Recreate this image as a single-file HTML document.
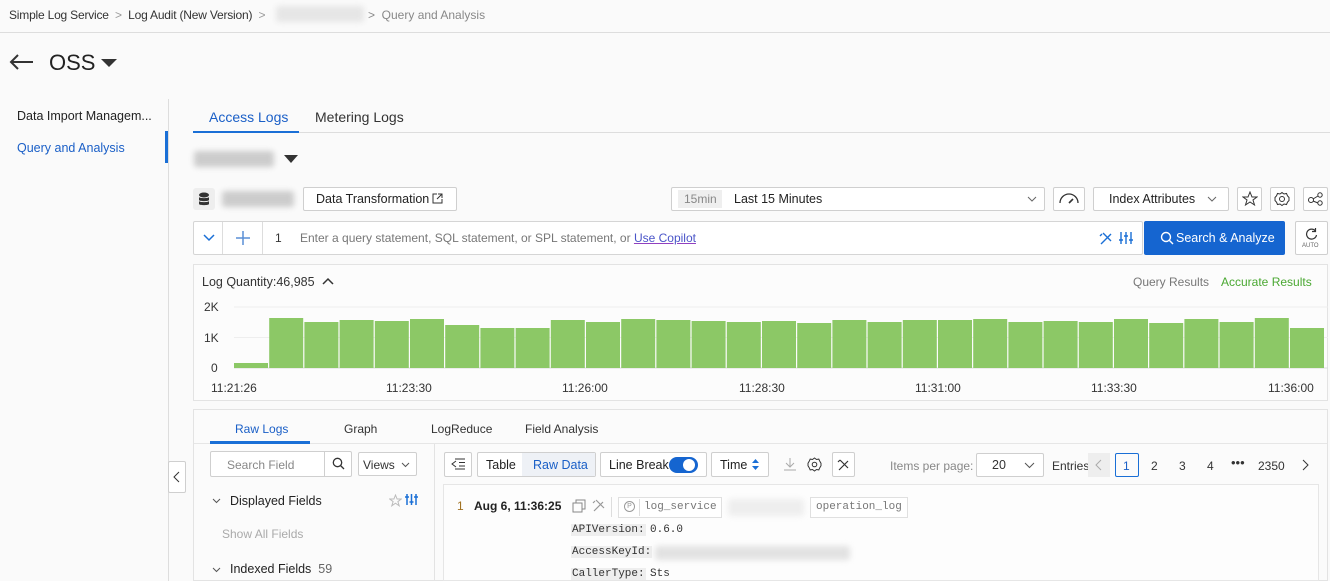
<!DOCTYPE html>
<html><head><meta charset="utf-8"><style>
*{box-sizing:border-box;margin:0;padding:0}
body{width:1330px;height:581px;overflow:hidden;background:#fafafa;font-family:"Liberation Sans",sans-serif;font-size:12px;color:#333;position:relative}
.a{position:absolute;white-space:nowrap}
.btn{position:absolute;border:1px solid #cfcfcf;background:#fff;border-radius:2px}
.blur{position:absolute;background:#ddd;filter:blur(3px);border-radius:3px}
.mono{font-family:"Liberation Mono",monospace;font-size:11px}
</style></head><body>
<div class="a" style="left:9px;top:8px;font-size:12px;color:#333;letter-spacing:-0.2px">Simple Log Service <span style="color:#999">&nbsp;&gt;&nbsp;</span> Log Audit (New Version) <span style="color:#999">&nbsp;&gt;</span></div>
<div class="blur" style="left:276px;top:6px;width:88px;height:16px;background:#e6e6e6"></div>
<div class="a" style="left:368px;top:8px;color:#888">&gt;&nbsp; Query and Analysis</div>
<div class="a" style="left:0;top:32px;width:1330px;height:1px;background:#ddd"></div>
<svg class="a" style="left:9px;top:53px" width="26" height="18"><path d="M24 9H2M9 2L2 9l7 7" stroke="#333" stroke-width="2" fill="none"/></svg>
<div class="a" style="left:49px;top:50px;font-size:22px;color:#222">OSS</div>
<svg class="a" style="left:101px;top:59px" width="16" height="9"><path d="M0 0h16L8 8z" fill="#333"/></svg>
<div class="a" style="left:17px;top:109px;font-size:12.5px;color:#222">Data Import Managem...</div>
<div class="a" style="left:17px;top:141px;font-size:12.5px;color:#1a5fc7">Query and Analysis</div>
<div class="a" style="left:168px;top:99px;width:1px;height:482px;background:#ddd"></div>
<div class="a" style="left:165px;top:131px;width:3px;height:32px;background:#1a6fd6"></div>
<div class="a" style="left:209px;top:109px;font-size:14px;color:#1a5fc7">Access Logs</div>
<div class="a" style="left:315px;top:109px;font-size:14px;color:#333">Metering Logs</div>
<div class="a" style="left:193px;top:131px;width:106px;height:2px;background:#1a6fd6"></div>
<div class="a" style="left:299px;top:132px;width:1031px;height:1px;background:#ddd"></div>
<div class="blur" style="left:194px;top:151px;width:80px;height:16px;background:#ccc"></div>
<svg class="a" style="left:284px;top:155px" width="14" height="8"><path d="M0 0h14L7 8z" fill="#333"/></svg>
<div class="a" style="left:193px;top:188px;width:22px;height:22px;background:#eee;border-radius:3px"></div>
<svg class="a" style="left:198px;top:192px" width="12" height="14"><ellipse cx="6" cy="3" rx="5" ry="2.5" fill="#333"/><path d="M1 5v3c0 1.5 10 1.5 10 0V5c0 1.5-10 1.5-10 0zM1 9v3c0 1.5 10 1.5 10 0V9c0 1.5-10 1.5-10 0z" fill="#333"/></svg>
<div class="blur" style="left:222px;top:191px;width:72px;height:16px;background:#ccc"></div>
<div class="btn" style="left:303px;top:187px;width:154px;height:24px"></div>
<div class="a" style="left:316px;top:192px;font-size:12.5px;color:#222">Data Transformation</div>
<svg class="a" style="left:432px;top:193px" width="11" height="11"><path d="M5 1H1v9h9V6M6 1h4v4M10 1L5 6" stroke="#333" fill="none"/></svg>
<div class="btn" style="left:671px;top:187px;width:374px;height:24px"></div>
<div class="a" style="left:678px;top:190px;width:44px;height:18px;background:#efefef"></div>
<div class="a" style="left:684px;top:192px;font-size:12px;color:#888">15min</div>
<div class="a" style="left:734px;top:192px;font-size:12.5px;color:#222">Last 15 Minutes</div>
<svg class="a" style="left:1027px;top:196px" width="10" height="6"><path d="M1 1l4 4 4-4" stroke="#666" fill="none"/></svg>
<div class="btn" style="left:1053px;top:187px;width:32px;height:24px"></div>
<svg class="a" style="left:1058px;top:191px" width="22" height="14"><path d="M2 12A9 9 0 0 1 20 12" stroke="#333" stroke-width="1.3" fill="none"/><path d="M11 12l4-4" stroke="#333" stroke-width="1.6"/></svg>
<div class="btn" style="left:1093px;top:187px;width:136px;height:24px"></div>
<div class="a" style="left:1109px;top:192px;font-size:12.5px;color:#222">Index Attributes</div>
<svg class="a" style="left:1207px;top:196px" width="10" height="6"><path d="M1 1l4 4 4-4" stroke="#666" fill="none"/></svg>
<div class="btn" style="left:1237px;top:187px;width:25px;height:24px"></div>
<svg class="a" style="left:1242px;top:191px" width="16" height="16"><path d="M8 1l2 5h5l-4 3 1.5 5L8 11l-4.5 3L5 9 1 6h5z" stroke="#333" fill="none"/></svg>
<div class="btn" style="left:1270px;top:187px;width:25px;height:24px"></div>
<svg class="a" style="left:1274px;top:191px" width="16" height="16"><circle cx="8" cy="8" r="2.5" stroke="#333" fill="none"/><path d="M8 1.5l2 1.5 2.5-.5 1 2.3L15 6.5v3l-1.5 1.7-1 2.3-2.5-.5L8 14.5 6 13l-2.5.5-1-2.3L1 9.5v-3l1.5-1.7 1-2.3L6 3z" stroke="#333" fill="none"/></svg>
<div class="btn" style="left:1303px;top:187px;width:25px;height:24px"></div>
<svg class="a" style="left:1307px;top:192px" width="17" height="14"><circle cx="4" cy="8" r="2.5" stroke="#333" fill="none"/><circle cx="13" cy="3" r="2.2" stroke="#333" fill="none"/><circle cx="13" cy="11" r="2.2" stroke="#333" fill="none"/><path d="M6 7l5-3M6 9l5 2" stroke="#333"/></svg>
<div class="btn" style="left:193px;top:221px;width:950px;height:34px;border-color:#d5d5d5"></div>
<div class="a" style="left:222px;top:222px;width:1px;height:32px;background:#ddd"></div>
<div class="a" style="left:262px;top:222px;width:1px;height:32px;background:#ddd"></div>
<svg class="a" style="left:203px;top:234px" width="12" height="8"><path d="M1 1l5 5 5-5" stroke="#1a6fd6" stroke-width="1.5" fill="none"/></svg>
<svg class="a" style="left:236px;top:231px" width="14" height="14"><path d="M7 0v14M0 7h14" stroke="#5a8fd6" stroke-width="1.5"/></svg>
<div class="a" style="left:275px;top:231px;color:#333">1</div>
<div class="a" style="left:300px;top:231px;color:#777">Enter a query statement, SQL statement, or SPL statement, or <span style="color:#4a55c8;text-decoration:underline;text-decoration-color:#9040c0">Use Copilot</span></div>
<svg class="a" style="left:1099px;top:231px" width="14" height="14"><path d="M2 13L12 3M4 2l8 8M1 5l2-2" stroke="#1a6fd6" stroke-width="1.4" fill="none"/></svg>
<svg class="a" style="left:1119px;top:231px" width="14" height="14"><path d="M2 1v12M7 1v12M12 1v12M0 9h4M5 5h4M10 9h4" stroke="#1a6fd6" stroke-width="1.4"/></svg>
<div class="a" style="left:1144px;top:221px;width:141px;height:34px;background:#1565d0;border-radius:2px"></div>
<svg class="a" style="left:1160px;top:231px" width="14" height="14"><circle cx="6" cy="6" r="4.5" stroke="#fff" stroke-width="1.4" fill="none"/><path d="M9.5 9.5l3.5 3.5" stroke="#fff" stroke-width="1.4"/></svg>
<div class="a" style="left:1176px;top:231px;color:#fff;font-size:12.5px">Search &amp; Analyze</div>
<div class="btn" style="left:1295px;top:221px;width:33px;height:34px"></div>
<svg class="a" style="left:1305px;top:227px" width="13" height="13"><path d="M10.5 4A5 5 0 1 0 11.5 8M10.5 1v3.5H7" stroke="#333" stroke-width="1.2" fill="none"/></svg>
<div class="a" style="left:1302px;top:243px;font-size:6px;color:#666">AUTO</div>
<div class="a" style="left:193px;top:264px;width:1135px;height:137px;border:1px solid #e3e3e3;background:#fcfcfc"></div>
<div class="a" style="left:202px;top:275px;font-size:12.5px;color:#333">Log Quantity:46,985</div>
<svg class="a" style="left:322px;top:277px" width="12" height="8"><path d="M1 7l5-5 5 5" stroke="#333" stroke-width="1.5" fill="none"/></svg>
<div class="a" style="left:1133px;top:275px;color:#777">Query Results</div>
<div class="a" style="left:1221px;top:275px;color:#4aa832">Accurate Results</div>
<div class="a" style="left:204px;top:300px;color:#333">2K</div>
<div class="a" style="left:204px;top:331px;color:#333">1K</div>
<div class="a" style="left:211px;top:361px;color:#333">0</div>
<svg class="a" style="left:230px;top:300px" width="1098" height="80">
<path d="M4 7H1098M4 37.5H1098" stroke="#eee"/>
<path d="M4 68H1098" stroke="#ddd"/>
<g fill="#8cc866">
<rect x="4" y="63" width="34" height="5"/>
<rect x="39.2" y="18" width="34" height="50"/>
<rect x="74.4" y="22" width="34" height="46"/>
<rect x="109.6" y="20" width="34" height="48"/>
<rect x="144.8" y="21" width="34" height="47"/>
<rect x="180" y="19" width="34" height="49"/>
<rect x="215.2" y="25" width="34" height="43"/>
<rect x="250.4" y="28" width="34" height="40"/>
<rect x="285.6" y="28" width="34" height="40"/>
<rect x="320.8" y="20" width="34" height="48"/>
<rect x="356" y="22" width="34" height="46"/>
<rect x="391.2" y="19" width="34" height="49"/>
<rect x="426.4" y="20" width="34" height="48"/>
<rect x="461.6" y="21" width="34" height="47"/>
<rect x="496.8" y="22" width="34" height="46"/>
<rect x="532" y="21" width="34" height="47"/>
<rect x="567.2" y="23" width="34" height="45"/>
<rect x="602.4" y="20" width="34" height="48"/>
<rect x="637.6" y="22" width="34" height="46"/>
<rect x="672.8" y="20" width="34" height="48"/>
<rect x="708" y="20" width="34" height="48"/>
<rect x="743.2" y="19" width="34" height="49"/>
<rect x="778.4" y="22" width="34" height="46"/>
<rect x="813.6" y="21" width="34" height="47"/>
<rect x="848.8" y="22" width="34" height="46"/>
<rect x="884" y="19" width="34" height="49"/>
<rect x="919.2" y="23" width="34" height="45"/>
<rect x="954.4" y="19" width="34" height="49"/>
<rect x="989.6" y="22" width="34" height="46"/>
<rect x="1024.8" y="18" width="34" height="50"/>
<rect x="1060" y="28" width="34" height="40"/>
</g></svg>
<div class="a" style="left:211px;top:381px;color:#333">11:21:26</div>
<div class="a" style="left:386px;top:381px;color:#333">11:23:30</div>
<div class="a" style="left:562px;top:381px;color:#333">11:26:00</div>
<div class="a" style="left:739px;top:381px;color:#333">11:28:30</div>
<div class="a" style="left:915px;top:381px;color:#333">11:31:00</div>
<div class="a" style="left:1091px;top:381px;color:#333">11:33:30</div>
<div class="a" style="left:1268px;top:381px;color:#333">11:36:00</div>
<div class="a" style="left:193px;top:409px;width:1135px;height:172px;border:1px solid #e3e3e3;background:#fbfbfb"></div>
<div class="a" style="left:194px;top:443px;width:1133px;height:1px;background:#e6e6e6"></div>
<div class="a" style="left:235px;top:422px;color:#1a5fc7">Raw Logs</div>
<div class="a" style="left:344px;top:422px;color:#333">Graph</div>
<div class="a" style="left:431px;top:422px;color:#333">LogReduce</div>
<div class="a" style="left:525px;top:422px;color:#333">Field Analysis</div>
<div class="a" style="left:210px;top:441px;width:100px;height:3px;background:#1a6fd6"></div>
<div class="a" style="left:434px;top:444px;width:1px;height:137px;background:#e3e3e3"></div>
<div class="btn" style="left:168px;top:461px;width:18px;height:32px"></div>
<svg class="a" style="left:173px;top:471px" width="8" height="12"><path d="M6 1L1 6l5 5" stroke="#333" fill="none"/></svg>
<div class="btn" style="left:210px;top:451px;width:142px;height:26px"></div>
<div class="a" style="left:324px;top:452px;width:1px;height:24px;background:#cfcfcf"></div>
<div class="a" style="left:227px;top:458px;color:#888">Search Field</div>
<svg class="a" style="left:332px;top:457px" width="13" height="13"><circle cx="5.5" cy="5.5" r="4.2" stroke="#333" stroke-width="1.3" fill="none"/><path d="M8.5 8.5l3.5 3.5" stroke="#333" stroke-width="1.3"/></svg>
<div class="btn" style="left:358px;top:452px;width:59px;height:24px"></div>
<div class="a" style="left:363px;top:458px;color:#333">Views</div>
<svg class="a" style="left:401px;top:462px" width="9" height="6"><path d="M1 1l3.5 3.5L8 1" stroke="#555" fill="none"/></svg>
<svg class="a" style="left:212px;top:498px" width="9" height="6"><path d="M1 1l3.5 3.5L8 1" stroke="#555" fill="none"/></svg>
<div class="a" style="left:230px;top:494px;color:#222;font-size:12.5px">Displayed Fields</div>
<svg class="a" style="left:389px;top:494px" width="13" height="13"><path d="M6.5 1l1.6 4h4.2l-3.4 2.6 1.3 4.2-3.7-2.6-3.7 2.6 1.3-4.2L.7 5h4.2z" stroke="#bbb" fill="none"/></svg>
<svg class="a" style="left:405px;top:493px" width="13" height="13"><path d="M2 1v11M6.5 1v11M11 1v11M0 4h4M4.5 9h4M9 4h4" stroke="#1a6fd6" stroke-width="1.5"/></svg>
<div class="a" style="left:222px;top:527px;color:#aaa">Show All Fields</div>
<svg class="a" style="left:212px;top:567px" width="9" height="6"><path d="M1 1l3.5 3.5L8 1" stroke="#555" fill="none"/></svg>
<div class="a" style="left:230px;top:562px;color:#222;font-size:12.5px">Indexed Fields <span style="color:#666">&nbsp;59</span></div>
<div class="btn" style="left:444px;top:452px;width:28px;height:25px"></div>
<svg class="a" style="left:451px;top:458px" width="14" height="12"><path d="M4 1h10M8 4.5h6M8 8h6M4 11h10M5 3L1 6l4 3" stroke="#333" fill="none"/></svg>
<div class="btn" style="left:477px;top:452px;width:119px;height:25px"></div>
<div class="a" style="left:522px;top:453px;width:73px;height:23px;background:#eef1f6"></div>
<div class="a" style="left:486px;top:458px;color:#222;font-size:12.5px">Table</div>
<div class="a" style="left:533px;top:458px;color:#1a5fc7;font-size:12.5px">Raw Data</div>
<div class="btn" style="left:600px;top:452px;width:107px;height:25px"></div>
<div class="a" style="left:609px;top:458px;color:#222;font-size:12.5px">Line Break</div>
<div class="a" style="left:669px;top:457px;width:29px;height:16px;border-radius:8px;background:#1565d0"></div>
<div class="a" style="left:683px;top:459px;width:12px;height:12px;border-radius:6px;background:#fff"></div>
<div class="btn" style="left:711px;top:452px;width:58px;height:25px"></div>
<div class="a" style="left:720px;top:458px;color:#222;font-size:12.5px">Time</div>
<svg class="a" style="left:752px;top:459px" width="7" height="11"><path d="M0 4l3.5-4L7 4zM0 7l3.5 4L7 7z" fill="#1a6fd6"/></svg>
<svg class="a" style="left:783px;top:457px" width="14" height="14"><path d="M7 1v9M3 6l4 4 4-4M1 13h12" stroke="#aaa" fill="none"/></svg>
<svg class="a" style="left:807px;top:457px" width="15" height="15"><circle cx="7.5" cy="7.5" r="2.3" stroke="#333" fill="none"/><path d="M7.5 1l2 1.5 2.3-.4 1 2.2L14 6.3v2.4l-1.2 2-1 2.2-2.3-.4-2 1.5-2-1.5-2.3.4-1-2.2L1 8.7V6.3l1.2-2 1-2.2 2.3.4z" stroke="#333" fill="none"/></svg>
<div class="btn" style="left:832px;top:452px;width:23px;height:25px"></div>
<svg class="a" style="left:837px;top:458px" width="13" height="13"><path d="M2 12L11 3M3 2l8 8M1 4l2-2" stroke="#333" stroke-width="1.2" fill="none"/></svg>
<div class="a" style="left:890px;top:459px;color:#888">Items per page:</div>
<div class="btn" style="left:976px;top:453px;width:68px;height:24px"></div>
<div class="a" style="left:992px;top:458px;color:#333;font-size:12.5px">20</div>
<svg class="a" style="left:1024px;top:462px" width="11" height="7"><path d="M1 1l4.5 4.5L10 1" stroke="#555" fill="none"/></svg>
<div class="a" style="left:1052px;top:459px;color:#333">Entries</div>
<div class="a" style="left:1088px;top:453px;width:22px;height:24px;background:#eee"></div>
<svg class="a" style="left:1095px;top:459px" width="7" height="12"><path d="M6 1L1 6l5 5" stroke="#aaa" fill="none"/></svg>
<div class="a" style="left:1115px;top:453px;width:24px;height:24px;border:1px solid #1a6fd6;border-radius:2px"></div>
<div class="a" style="left:1123px;top:459px;color:#1a5fc7">1</div>
<div class="a" style="left:1151px;top:459px;color:#333">2</div>
<div class="a" style="left:1179px;top:459px;color:#333">3</div>
<div class="a" style="left:1207px;top:459px;color:#333">4</div>
<div class="a" style="left:1231px;top:455px;color:#333;font-size:13px">•••</div>
<div class="a" style="left:1258px;top:459px;color:#333">2350</div>
<svg class="a" style="left:1302px;top:459px" width="7" height="12"><path d="M1 1l5 5-5 5" stroke="#333" fill="none"/></svg>
<div class="a" style="left:443px;top:484px;width:876px;height:97px;border:1px solid #e6e6e6;background:#fdfdfd"></div>
<div class="a" style="left:457px;top:499px;color:#a07020">1</div>
<div class="a" style="left:474px;top:499px;color:#222;font-weight:bold">Aug 6, 11:36:25</div>
<svg class="a" style="left:572px;top:499px" width="14" height="14"><rect x="1" y="4" width="9" height="9" stroke="#888" fill="none"/><path d="M4 4V1h9v9h-3" stroke="#888" fill="none"/></svg>
<svg class="a" style="left:592px;top:498px" width="14" height="14"><path d="M2 13L11 4M4 2l8 8M1 5l2-2" stroke="#999" stroke-width="1.2" fill="none"/></svg>
<div class="a" style="left:611px;top:497px;width:1px;height:20px;background:#ddd"></div>
<div class="a" style="left:618px;top:497px;width:104px;height:21px;border:1px solid #e0e0e0;background:#fff"></div>
<div class="a" style="left:624px;top:501px;width:11px;height:11px;border:1px solid #999;border-radius:50%;font-size:7px;color:#999;text-align:center;line-height:9px">P</div>
<div class="a" style="left:639px;top:499px;width:1px;height:17px;background:#ddd"></div>
<div class="a mono" style="left:644px;top:501px;color:#777">log_service</div>
<div class="blur" style="left:728px;top:499px;width:76px;height:17px;background:#eee"></div>
<div class="a" style="left:810px;top:497px;width:98px;height:21px;border:1px solid #e0e0e0;background:#fff"></div>
<div class="a mono" style="left:816px;top:501px;color:#777">operation_log</div>
<div class="a mono" style="left:571px;top:524px;background:#eee;padding:0 1px;color:#333">APIVersion:</div>
<div class="a mono" style="left:650px;top:524px;color:#333">0.6.0</div>
<div class="a mono" style="left:571px;top:546px;background:#eee;padding:0 1px;color:#333">AccessKeyId:</div>
<div class="blur" style="left:655px;top:546px;width:195px;height:14px;background:#e2e2e2"></div>
<div class="a mono" style="left:571px;top:568px;background:#eee;padding:0 1px;color:#333">CallerType:</div>
<div class="a mono" style="left:650px;top:568px;color:#333">Sts</div>
</body></html>
